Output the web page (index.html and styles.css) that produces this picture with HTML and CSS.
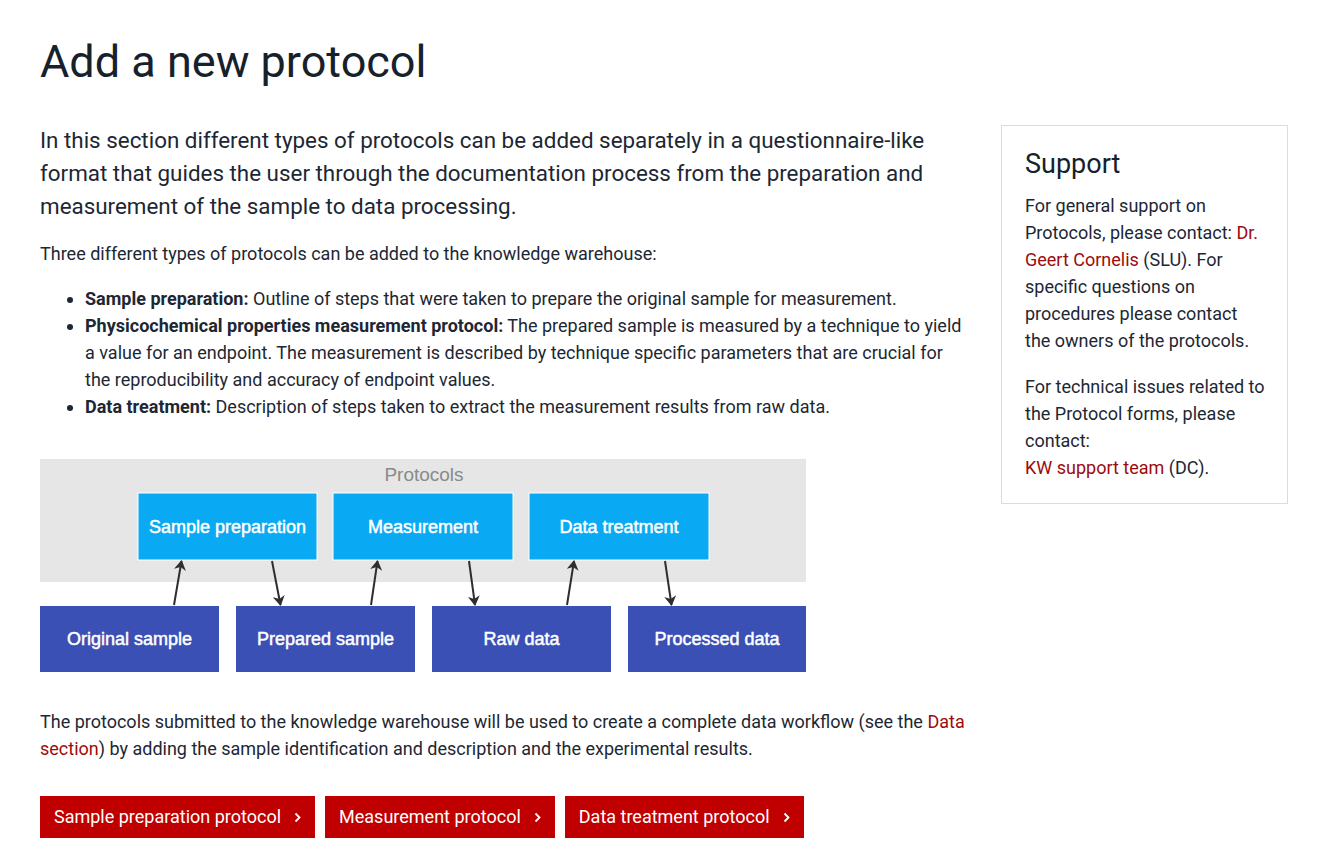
FILE: index.html
```html
<!DOCTYPE html>
<html lang="en">
<head>
<meta charset="utf-8">
<title>Add a new protocol</title>
<link rel="stylesheet" href="styles.css">
</head>
<body>
<div class="page">
  <h1 class="title">Add a new protocol</h1>
  <div class="layout">
    <main class="main">
      <p class="lead">In this section different types of protocols can be added separately in a questionnaire-like format that guides the user through the documentation process from the preparation and measurement of the sample to data processing.</p>
      <p class="text">Three different types of protocols can be added to the knowledge warehouse:</p>
      <ul class="types">
        <li><strong>Sample preparation:</strong> Outline of steps that were taken to prepare the original sample for measurement.</li>
        <li><strong>Physicochemical properties measurement protocol:</strong> The prepared sample is measured by a technique to yield a value for an endpoint. The measurement is described by technique specific parameters that are crucial for the reproducibility and accuracy of endpoint values.</li>
        <li><strong>Data treatment:</strong> Description of steps taken to extract the measurement results from raw data.</li>
      </ul>
      <div class="diagram">
        <svg width="766" height="213" viewBox="0 0 766 213" xmlns="http://www.w3.org/2000/svg">
          <defs>
            <marker id="ah" viewBox="0 0 10 12" refX="9" refY="6" markerWidth="10" markerHeight="12" markerUnits="userSpaceOnUse" orient="auto">
              <path d="M0,0 L10,6 L0,12 L3,6 Z" fill="#2e2e2e"/>
            </marker>
          </defs>
          <rect x="0" y="0" width="766" height="123" fill="#e6e6e6"/>
          <text class="dg-label" x="384" y="22" text-anchor="middle">Protocols</text>
          <g class="proto">
            <rect x="98" y="34" width="179" height="67"/>
            <rect x="293" y="34" width="180" height="67"/>
            <rect x="489" y="34" width="180" height="67"/>
          </g>
          <g class="dg-text">
            <text x="187.5" y="74" text-anchor="middle">Sample preparation</text>
            <text x="383" y="74" text-anchor="middle">Measurement</text>
            <text x="579" y="74" text-anchor="middle">Data treatment</text>
          </g>
          <g class="data">
            <rect x="0" y="147" width="179" height="66"/>
            <rect x="196" y="147" width="179" height="66"/>
            <rect x="392" y="147" width="179" height="66"/>
            <rect x="588" y="147" width="178" height="66"/>
          </g>
          <g class="dg-text">
            <text x="89.5" y="186" text-anchor="middle">Original sample</text>
            <text x="285.5" y="186" text-anchor="middle">Prepared sample</text>
            <text x="481.5" y="186" text-anchor="middle">Raw data</text>
            <text x="677" y="186" text-anchor="middle">Processed data</text>
          </g>
          <g class="arrows" marker-end="url(#ah)">
            <line x1="134" y1="146" x2="141.5" y2="102"/>
            <line x1="232" y1="102" x2="240.5" y2="146"/>
            <line x1="331" y1="146" x2="337.5" y2="102"/>
            <line x1="429" y1="102" x2="435" y2="146"/>
            <line x1="527" y1="146" x2="534" y2="102"/>
            <line x1="625" y1="102" x2="631.5" y2="146"/>
          </g>
        </svg>
      </div>
      <p class="text closing">The protocols submitted to the knowledge warehouse will be used to create a complete data workflow (see the <a href="#">Data section</a>) by adding the sample identification and description and the experimental results.</p>
      <div class="actions">
        <a class="btn" href="#">Sample preparation protocol<svg class="chev" width="7" height="11" viewBox="0 0 7 11"><polyline points="1.5,1.5 5.5,5.5 1.5,9.5"/></svg></a>
        <a class="btn" href="#">Measurement protocol<svg class="chev" width="7" height="11" viewBox="0 0 7 11"><polyline points="1.5,1.5 5.5,5.5 1.5,9.5"/></svg></a>
        <a class="btn" href="#">Data treatment protocol<svg class="chev" width="7" height="11" viewBox="0 0 7 11"><polyline points="1.5,1.5 5.5,5.5 1.5,9.5"/></svg></a>
      </div>
    </main>
    <aside class="support">
      <h2 class="support-title">Support</h2>
      <p class="text">For general support on Protocols, please contact: <a href="#">Dr. Geert Cornelis</a> (SLU). For specific questions on procedures please contact the owners of the protocols.</p>
      <p class="text">For technical issues related to the Protocol forms, please contact:<br><a href="#">KW support team</a> (DC).</p>
    </aside>
  </div>
</div>
</body>
</html>
```

FILE: styles.css
```css
* { box-sizing: border-box; }
html, body { margin: 0; padding: 0; background: #ffffff; }
body {
  font-family: Roboto, "Noto Sans", Arial, sans-serif;
  color: #1d2733;
}
.page {
  padding: 35px 34px 40px 40px;
}
.title {
  margin: 0;
  font-size: 45px;
  font-weight: 400;
  line-height: 54px;
  color: #16212c;
}
.layout {
  display: flex;
  align-items: flex-start;
  gap: 36px;
  margin-top: 35px;
}
.main {
  width: 925px;
  flex: 0 0 925px;
}
.lead {
  margin: 0;
  font-size: 22.4px;
  line-height: 33px;
}
.text {
  margin: 0;
  font-size: 18px;
  line-height: 27px;
}
.main .text { margin-top: 17px; }
a { color: #9e0b0b; text-decoration: none; }
.types {
  margin: 18px 0 0 0;
  padding-left: 45px;
  font-size: 18px;
  line-height: 27px;
}
.types strong { font-weight: 700; }
.diagram {
  margin-top: 39px;
  height: 213px;
}
.diagram svg { display: block; }
.proto rect { fill: #09aaf3; stroke: #ffffff; stroke-width: 1; }
.data rect { fill: #3a50b5; }
.dg-text text {
  font-family: "Liberation Sans", Arial, sans-serif;
  font-size: 18px;
  font-weight: 400;
  fill: #ffffff;
  stroke: #ffffff;
  stroke-width: 0.5;
}
.dg-label {
  font-family: "Liberation Sans", Arial, sans-serif;
  font-size: 19px;
  fill: #8a8a8a;
}
.arrows line { stroke: #2e2e2e; stroke-width: 2; }
.main .closing { margin-top: 36px; }
.actions {
  display: flex;
  gap: 10px;
  margin-top: 34px;
}
.btn {
  display: inline-flex;
  align-items: center;
  height: 42px;
  padding: 0 14px 0 14px;
  background: #c00000;
  color: #ffffff;
  font-size: 18px;
  line-height: 42px;
}
.chev {
  margin-left: 13px;
  fill: none;
  stroke: #ffffff;
  stroke-width: 1.8;
}
.support {
  width: 287px;
  flex: 0 0 287px;
  margin-top: 1px;
  border: 1px solid #dcdcdc;
  padding: 22px 21px 22px 23px;
}
.support-title {
  margin: 0 0 12px 0;
  font-size: 27px;
  font-weight: 400;
  line-height: 32px;
  color: #16212c;
}
.support .text + .text { margin-top: 19px; }
```
